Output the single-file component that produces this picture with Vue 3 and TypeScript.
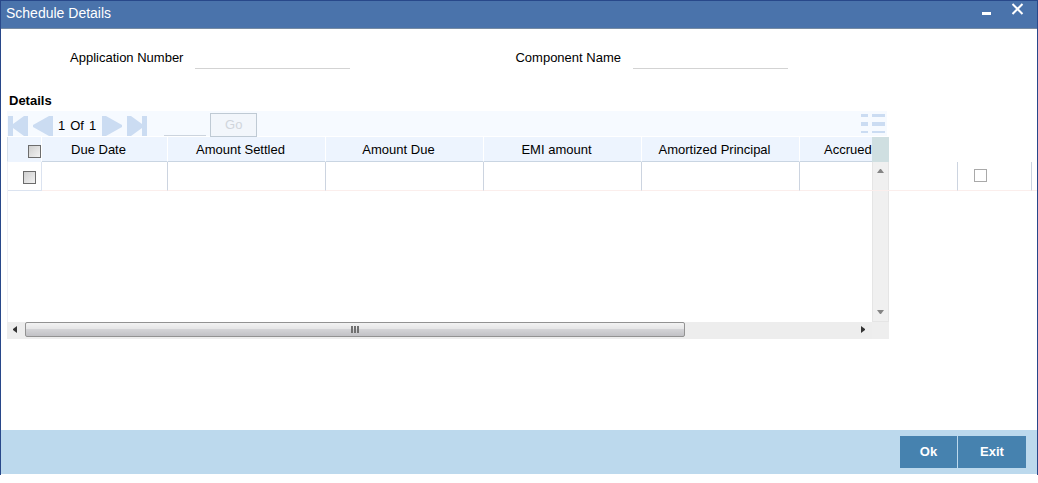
<script setup lang="ts">
import { ref } from 'vue'

const columns: string[] = ['Due Date', 'Amount Settled', 'Amount Due', 'EMI amount', 'Amortized Principal']
const applicationNumber = ref('')
const componentName = ref('')
const page = ref('')
const allSelected = ref(false)
const rowSelected = ref(false)
const rowFlag = ref(false)
</script>

<template>
  <main class="window">
    <header class="titlebar">
      <h1>Schedule Details</h1>
      <div class="window-actions">
        <button type="button" aria-label="Minimize">
          <svg width="13" height="13" viewBox="0 0 13 13"><path d="M2 10h9v3H2z" fill="#fff" /></svg>
        </button>
        <button type="button" aria-label="Close">
          <svg width="13" height="13" viewBox="0 0 13 13"><path d="M1.5 2l10 10M11.5 2l-10 10" stroke="#fff" stroke-width="2" /></svg>
        </button>
      </div>
    </header>

    <section class="content">
      <div class="fields">
        <div class="field">
          <label for="application">Application Number</label>
          <input id="application" v-model="applicationNumber" type="text" />
        </div>
        <div class="field">
          <label for="component">Component Name</label>
          <input id="component" v-model="componentName" type="text" />
        </div>
      </div>

      <h2>Details</h2>

      <div class="toolbar">
        <button class="nav" type="button" aria-label="First page">
          <svg width="20" height="20"><path d="M0 0h5v8L16 0h4v20h-4L5 12v8H0z" /></svg>
        </button>
        <button class="nav" type="button" aria-label="Previous page">
          <svg width="20" height="20"><path d="M0 9L16 0h4v20h-4L0 11z" /></svg>
        </button>
        <span class="pages"><span>1</span><span>Of</span><span>1</span></span>
        <button class="nav" type="button" aria-label="Next page">
          <svg width="20" height="20"><path d="M20 9L4 0H0v20h4l16-9z" /></svg>
        </button>
        <button class="nav" type="button" aria-label="Last page">
          <svg width="20" height="20"><path d="M20 0h-5v8L4 0H0v20h4l11-8v8h5z" /></svg>
        </button>
        <input v-model="page" class="page-input" type="text" aria-label="Page number" />
        <button class="go" type="button" disabled>Go</button>
        <button class="nav view" type="button" aria-label="Single record view">
          <svg width="24" height="22"><path d="M0 0h7v3H0zM11 0h13v3H11zM0 8h7v4H0zM11 8h13v4H11zM0 17h7v2H0zM11 17h13v2H11z" /></svg>
        </button>
      </div>

      <div class="grid">
        <div class="head">
          <table>
            <colgroup><col class="c-check" /><col class="c-date" /><col v-for="n in 5" :key="n" class="c-amount" /></colgroup>
            <thead>
              <tr>
                <th class="select-all"><input v-model="allSelected" class="shaded" type="checkbox" aria-label="Select all" /></th>
                <th v-for="column in columns" :key="column" scope="col">{{ column }}</th>
                <th class="cut" scope="col">Accrued</th>
              </tr>
            </thead>
          </table>
        </div>
        <div class="head-end"></div>

        <div class="vscroll">
          <svg width="7" height="4"><path d="M3 0h1l3 4H0z" /></svg>
          <svg width="7" height="4"><path d="M0 0h7L4 4H3z" /></svg>
        </div>

        <div class="rows">
          <table>
            <colgroup><col class="c-check" /><col class="c-date" /><col v-for="n in 5" :key="n" class="c-amount" /><col class="c-flag" /><col /></colgroup>
            <tbody>
              <tr>
                <td class="select-row"><input v-model="rowSelected" class="shaded" type="checkbox" aria-label="Select row" /></td>
                <td v-for="n in 6" :key="n"></td>
                <td class="flag"><input v-model="rowFlag" type="checkbox" aria-label="Row flag" /></td>
                <td class="rest"></td>
              </tr>
            </tbody>
          </table>
        </div>

        <div class="hscroll">
          <svg width="4" height="7"><path d="M4 0v7L0 4V3z" /></svg>
          <div class="track">
            <div class="thumb"><svg width="8" height="7"><path d="M0 0h2v7H0zM3 0h2v7H3zM6 0h2v7H6z" /></svg></div>
          </div>
          <svg width="4" height="7"><path d="M0 0v7l4-3V3z" /></svg>
        </div>
        <div class="corner"></div>
      </div>
    </section>

    <footer>
      <button type="button" class="ok">Ok</button>
      <button type="button" class="exit">Exit</button>
    </footer>
  </main>
</template>

<style>
body {
  background: #fff;
}
</style>

<style scoped>
* {
  box-sizing: border-box;
}
.window {
  overflow: hidden;
  border: 1px solid #28488a;
  border-bottom: 0;
  padding-bottom: 1px;
  color: #000;
  font: 13px/16px "Liberation Sans", Arial, sans-serif;
}
button,
input {
  margin: 0;
  padding: 0;
  border: 0;
  border-radius: 0;
  background: none;
  font: inherit;
  outline: none;
}
svg {
  display: block;
}
h1,
h2 {
  margin: 0;
}
.titlebar {
  display: flex;
  justify-content: space-between;
  height: 28px;
  padding: 0 13px 0 5px;
  border-bottom: 1px solid #768ba3;
  background: #4a73ab;
  color: #fff;
}
h1 {
  font-size: 14px;
  font-weight: 400;
  line-height: 24px;
}
.window-actions {
  display: flex;
  align-items: flex-start;
  gap: 18px;
  padding-top: 1px;
}
.content {
  padding: 20px 0 91px 6px;
}
.fields {
  display: flex;
  gap: 165px;
  padding-left: 63px;
}
.field {
  display: flex;
  gap: 12px;
}
.field label {
  padding-top: 1px;
}
.field input {
  width: 155px;
  height: 20px;
  border-bottom: 1px solid #d3d3d3;
}
h2 {
  padding: 24px 0 2px 2px;
  font-size: 13px;
  line-height: 16px;
}
.toolbar {
  display: flex;
  align-items: center;
  width: 880px;
  height: 26px;
  padding: 2px 2px 0 1px;
  border-bottom: 1px solid #fff;
  background: #f6faff;
}
.nav {
  fill: #cbdcf2;
}
.nav + .nav {
  margin-left: 5px;
}
.nav svg {
  margin-top: 2px;
}
.pages {
  display: flex;
  gap: 5px;
  padding: 2px 6px 0 5px;
}
.page-input {
  width: 42px;
  height: 22px;
  margin-left: 17px;
  border-bottom: 1px solid #ccd4de;
}
.go {
  width: 47px;
  height: 24px;
  margin-left: 4px;
  border: 1px solid #bfcad4;
  background: #f2f6fb;
  color: #d0d5dc;
}
.toolbar .view {
  margin-left: auto;
}
.toolbar .view svg {
  margin-top: 0;
}
.grid {
  display: grid;
  grid-template-columns: 865px 17px 1fr;
  grid-template-rows: 25px 160px 17px;
}
table {
  width: 100%;
  border-collapse: separate;
  border-spacing: 0;
  table-layout: fixed;
}
.c-check {
  width: 35px;
}
.c-date {
  width: 126px;
}
.c-amount {
  width: 158px;
}
.c-flag {
  width: 74px;
}
.head {
  grid-area: 1 / 1;
  overflow: hidden;
  background: #edf4fe;
}
.head table {
  width: 951px;
}
th {
  height: 25px;
  padding: 1px 12px 0 0;
  border-right: 1px solid #fff;
  border-bottom: 1px solid #c9d5e2;
  font-weight: 400;
  text-align: center;
}
.select-all {
  padding: 4px 0 0;
  border-bottom-color: #edf4fe;
  border-left: 1px solid #d5dfea;
  text-align: right;
}
.cut {
  padding-left: 24px;
  text-align: left;
}
.head-end {
  grid-area: 1 / 2;
  background: #cfdfe1;
}
.rows {
  grid-area: 2 / 1 / 3 / -1;
  border-left: 1px solid #efeff5;
}
td {
  height: 29px;
  padding: 0;
  border-right: 1px solid #ccd4e0;
  border-bottom: 1px solid #fbeeec;
}
.rows .c-check {
  width: 34px;
}
.select-row {
  padding: 2px 0 0 15px;
  border-color: #dbe3f0;
}
.flag {
  padding: 0 0 2px 16px;
}
.rest {
  border-right: 0;
}
input[type="checkbox"] {
  display: block;
  width: 13px;
  height: 13px;
  border: 1px solid #a9a9a9;
  appearance: none;
}
input.shaded {
  border-color: #6c6c6c;
  background: linear-gradient(135deg, #cfcfcf, #f2f2f2);
}
.select-all input {
  margin-left: auto;
}
.vscroll {
  grid-area: 2 / 2;
  display: flex;
  flex-direction: column;
  align-items: center;
  justify-content: space-between;
  padding: 7px 0;
  border: 1px solid #e5e5e5;
  border-top: 0;
  background: #f0f0f0;
  fill: #858585;
}
.hscroll {
  grid-area: 3 / 1;
  display: flex;
  align-items: center;
  padding: 0 7px 2px 6px;
  background: #ededed;
  fill: #333;
}
.track {
  flex: 1;
  padding: 0 0 0 8px;
}
.thumb {
  display: flex;
  align-items: center;
  justify-content: center;
  width: 79%;
  height: 15px;
  border: 1px solid #929292;
  border-radius: 2px;
  background: linear-gradient(#f3f3f3, #e6e6e7 45%, #d3d3d6 50%, #c1c1c5);
  fill: #707070;
}
.corner {
  grid-area: 3 / 2;
  background: #eee;
}
footer {
  display: flex;
  justify-content: flex-end;
  gap: 1px;
  padding: 6px 11px;
  background: #bcd9ed;
}
footer button {
  height: 32px;
  background: #4682af;
  color: #fff;
  font-weight: 700;
}
.ok {
  width: 57px;
}
.exit {
  width: 68px;
}
</style>
